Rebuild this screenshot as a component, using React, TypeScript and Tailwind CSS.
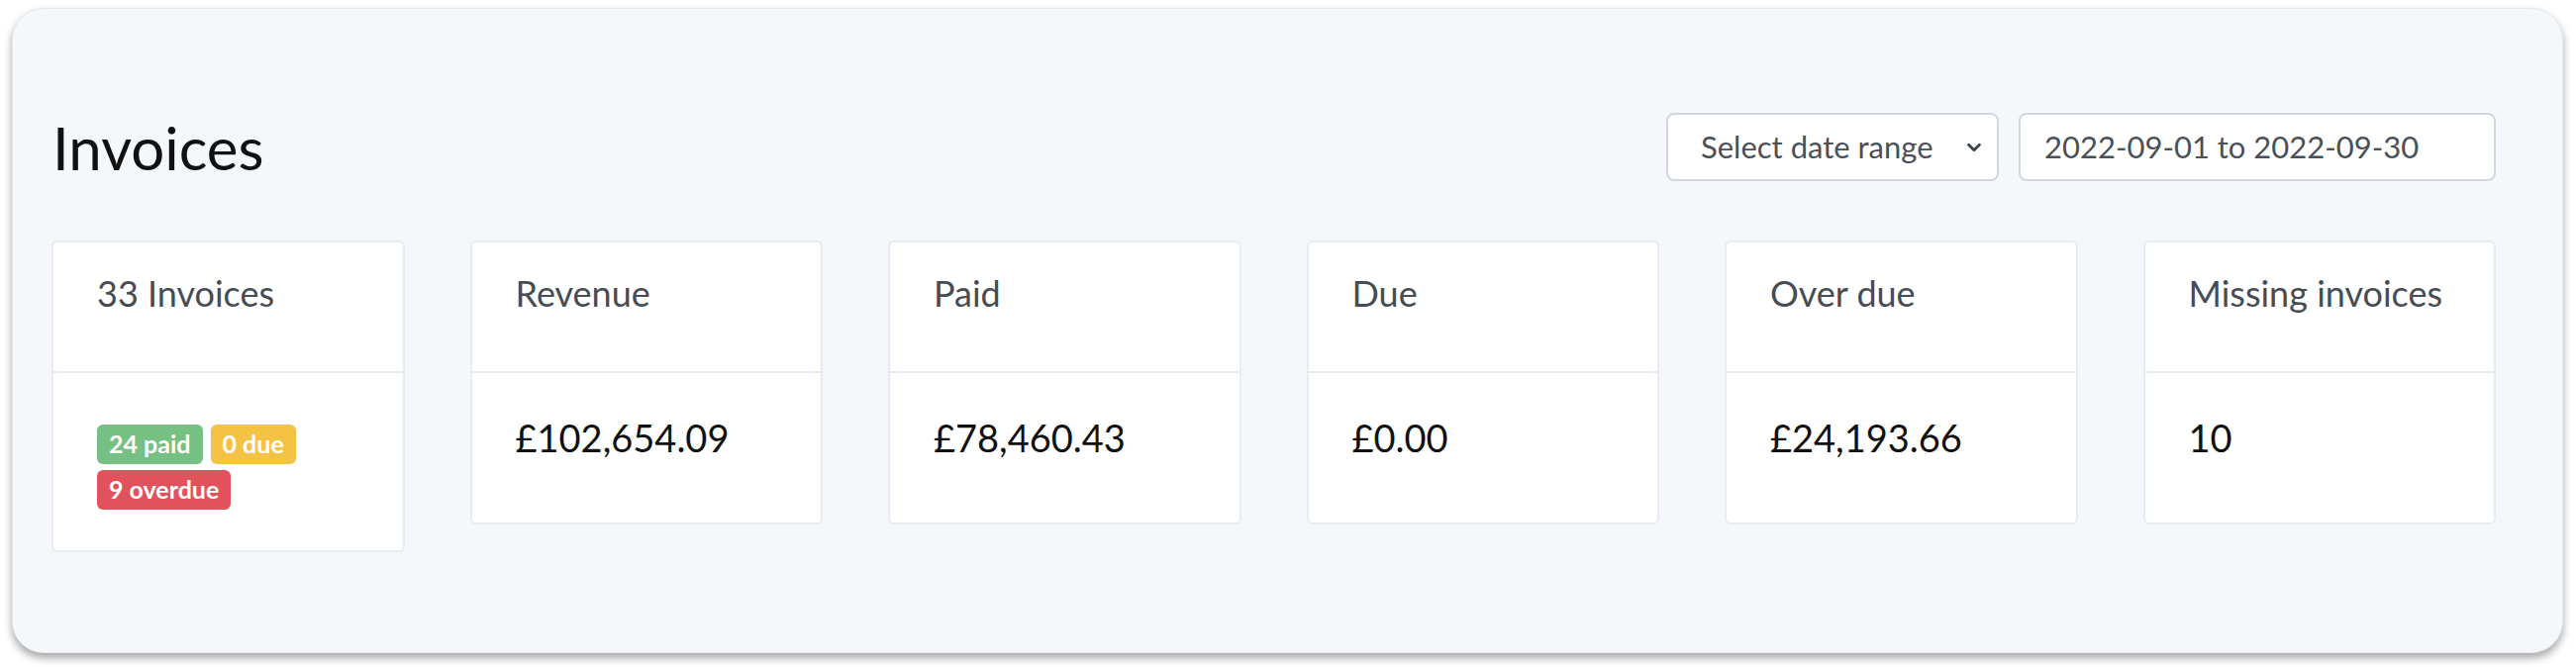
import { ChevronDown } from 'lucide-react';

interface Stat {
  label: string;
  value?: string;
}

const stats: Stat[] = [
  { label: 'Revenue', value: '£102,654.09' },
  { label: 'Paid', value: '£78,460.43' },
  { label: 'Due', value: '£0.00' },
  { label: 'Over due', value: '£24,193.66' },
  { label: 'Missing invoices', value: '10' },
];

function CardHeader({ label }: { label: string }) {
  return (
    <div className="h-[132px] border-b-2 border-[#e6e9f1] px-[44px] pt-[26px] text-[36px] leading-[50px] text-[#464c55]">
      {label}
    </div>
  );
}

function StatCard({ label, value }: Stat) {
  return (
    <div className="rounded-[6px] border-2 border-[#e8ebf2] bg-white">
      <CardHeader label={label} />
      <div className="h-[151px] px-[44px] pt-[37px] text-[38px] leading-[57px] text-[#111111]">{value}</div>
    </div>
  );
}

function Badge({ children, color }: { children: string; color: string }) {
  return (
    <span className={`inline-flex h-[40px] items-center rounded-[6px] px-[12px] text-[25px] font-bold text-white ${color}`}>
      {children}
    </span>
  );
}

export default function App() {
  return (
    <div className="min-h-screen bg-white pl-[12px] pt-[8px]" style={{ fontFamily: 'Lato, "Noto Sans", sans-serif' }}>
      <div className="h-[652px] w-[2577px] rounded-[32px] border border-[#e6e8ec] bg-[#f5f8fb] pl-[39px] pr-[67px] pt-[105px] shadow-[0_5px_8px_rgba(0,0,0,0.35)]">
        <div className="flex h-[69px] items-center justify-between">
          <h1 className="ml-[1px] text-[60px] font-normal leading-none text-[#111111]">Invoices</h1>
          <div className="flex gap-[20px]">
            <div className="flex h-[69px] w-[336px] items-center justify-between rounded-[8px] border-2 border-[#d3d7dd] bg-white pl-[33px] pr-[12px] text-[31px] text-[#4a5058]">
              <span>Select date range</span>
              <ChevronDown size={22} strokeWidth={3} className="text-[#3d434b]" />
            </div>
            <div className="flex h-[69px] w-[482px] items-center rounded-[8px] border-2 border-[#d3d7dd] bg-white pl-[24px] text-[31px] text-[#4a5058]">
              2022-09-01 to 2022-09-30
            </div>
          </div>
        </div>

        <div className="mt-[60px] grid grid-cols-6 items-start gap-[66px]">
          <div className="rounded-[6px] border-2 border-[#e8ebf2] bg-white">
            <CardHeader label="33 Invoices" />
            <div className="h-[179px] px-[44px] pt-[52px]">
              <div className="flex flex-wrap gap-x-[8px] gap-y-[6px]">
                <Badge color="bg-[#77c083]">24 paid</Badge>
                <Badge color="bg-[#f4c344]">0 due</Badge>
                <Badge color="bg-[#e2525c]">9 overdue</Badge>
              </div>
            </div>
          </div>
          {stats.map((s) => (
            <StatCard key={s.label} label={s.label} value={s.value} />
          ))}
        </div>
      </div>
    </div>
  );
}
